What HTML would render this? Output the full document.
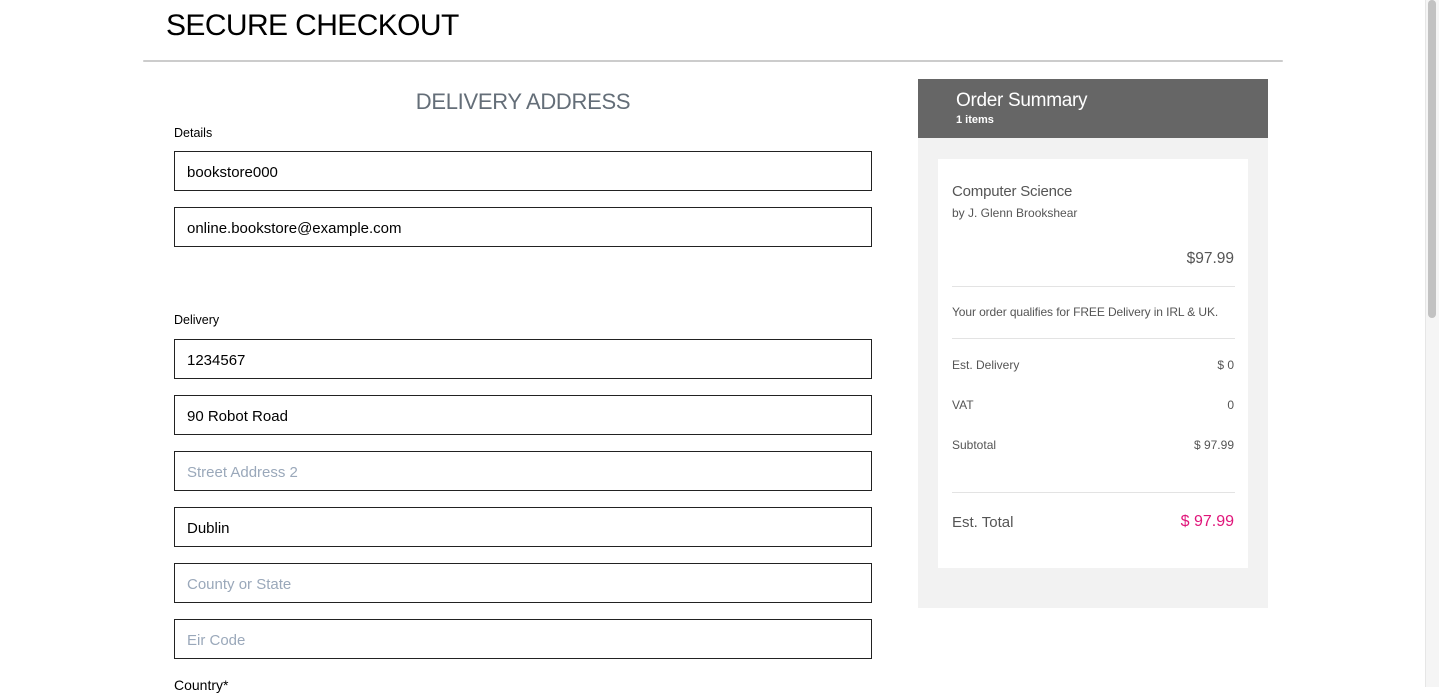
<!DOCTYPE html>
<html><head><style>
*{box-sizing:border-box;margin:0;padding:0}
body{width:1439px;height:687px;overflow:hidden;background:#fff;font-family:"Liberation Sans",sans-serif;position:relative}
.abs{position:absolute}
h1{position:absolute;left:166px;top:9px;font-size:30px;font-weight:400;color:#000;letter-spacing:-0.6px}
.hr{position:absolute;left:143px;top:60px;width:1140px;height:2px;background:#ccc;border-radius:1px}
.da{position:absolute;left:174px;width:698px;top:89px;text-align:center;font-size:22px;color:#646e78;letter-spacing:-0.3px}
.lbl{position:absolute;left:174px;font-size:12.5px;color:#000}
.in{position:absolute;left:174px;width:698px;height:40px;border:1px solid #222;font-size:15px;padding:12px 12px;color:#000}
.ph{color:#9aa8ba}
.side{position:absolute;left:918px;top:79px;width:350px;height:529px;background:#f2f2f2}
.sh{position:absolute;left:918px;top:79px;width:350px;height:59px;background:#666;color:#fff}
.card{position:absolute;left:938px;top:159px;width:310px;height:409px;background:#fff}
.t{position:absolute;color:#555}
.line{position:absolute;left:952px;width:283px;height:1px;background:#e3e3e3}
.sb{position:absolute;left:1425px;top:0;width:14px;height:687px;background:#f5f5f5;border-left:1px solid #e6e6e6}
.thumb{position:absolute;left:1428px;top:0;width:8px;height:318px;background:#c2c2c2;border-radius:4px}
</style></head><body>
<h1>SECURE CHECKOUT</h1>
<div class="hr"></div>
<div class="da">DELIVERY ADDRESS</div>
<div class="lbl" style="top:126px">Details</div>
<div class="in" style="top:151px">bookstore000</div>
<div class="in" style="top:207px">online.bookstore@example.com</div>
<div class="lbl" style="top:313px">Delivery</div>
<div class="in" style="top:339px">1234567</div>
<div class="in" style="top:395px">90 Robot Road</div>
<div class="in ph" style="top:451px">Street Address 2</div>
<div class="in" style="top:507px">Dublin</div>
<div class="in ph" style="top:563px">County or State</div>
<div class="in ph" style="top:619px">Eir Code</div>
<div class="lbl" style="top:677px;font-size:14px">Country*</div>

<div class="side"></div>
<div class="sh"><div class="abs" style="left:38px;top:11px;font-size:19px;letter-spacing:-0.3px">Order Summary</div><div class="abs" style="left:38px;top:35px;font-size:11px;font-weight:bold">1 items</div></div>
<div class="card"></div>
<div class="t" style="left:952px;top:183px;font-size:15px;letter-spacing:-0.2px">Computer Science</div>
<div class="t" style="left:952px;top:206px;font-size:12px">by J. Glenn Brookshear</div>
<div class="t" style="left:1100px;width:134px;text-align:right;top:250px;font-size:15.5px">$97.99</div>
<div class="line" style="top:286px"></div>
<div class="t" style="left:952px;top:305px;font-size:12px;letter-spacing:-0.1px">Your order qualifies for FREE Delivery in IRL &amp; UK.</div>
<div class="line" style="top:338px"></div>
<div class="t" style="left:952px;top:358px;font-size:12px">Est. Delivery</div>
<div class="t" style="left:1100px;width:134px;text-align:right;top:358px;font-size:12px">$ 0</div>
<div class="t" style="left:952px;top:398px;font-size:12px">VAT</div>
<div class="t" style="left:1100px;width:134px;text-align:right;top:398px;font-size:12px">0</div>
<div class="t" style="left:952px;top:438px;font-size:12px">Subtotal</div>
<div class="t" style="left:1100px;width:134px;text-align:right;top:438px;font-size:12px">$ 97.99</div>
<div class="line" style="top:492px"></div>
<div class="t" style="left:952px;top:514px;font-size:15px">Est. Total</div>
<div class="t" style="left:1100px;width:134px;text-align:right;top:513px;font-size:16px;color:#e0157a">$ 97.99</div>
<div class="sb"></div><div class="thumb"></div>
</body></html>
